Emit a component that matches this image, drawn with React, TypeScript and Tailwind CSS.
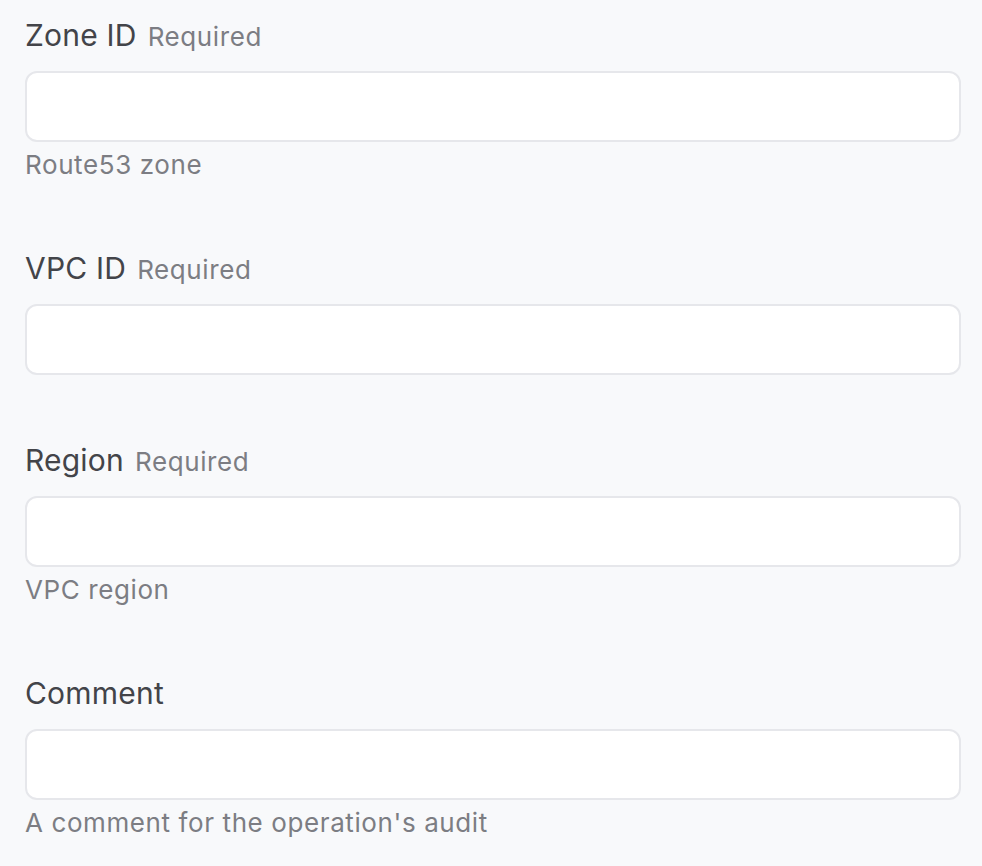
import React from 'react';

interface FieldProps {
  label: string;
  required?: boolean;
  help?: string;
}

const Field: React.FC<FieldProps> = ({ label, required, help }) => {
  return (
    <div className="mb-[67px]">
      <label className="flex items-baseline gap-[11px] h-[36px] leading-[36px]">
        <span className="text-[30px] tracking-[0.2px] text-[#434449]">{label}</span>
        {required && (
          <span className="text-[26px] tracking-[0.6px] text-[#7c7d83]">Required</span>
        )}
      </label>
      <input
        type="text"
        className="mt-[18px] block w-full h-[71px] rounded-[12px] border-2 border-[#e6e7eb] bg-white outline-none"
      />
      {help && (
        <p className="mt-[5px] mb-[3px] leading-[36px] text-[26px] tracking-[0.6px] text-[#7c7d83]">
          {help}
        </p>
      )}
    </div>
  );
};

export default function App() {
  return (
    <div
      className="min-h-[866px] bg-[#f8f9fb] pl-[25px] pr-[21px] pt-[17px]"
      style={{ fontFamily: 'Inter, "Noto Sans", sans-serif' }}
    >
      <Field label="Zone ID" required help="Route53 zone" />
      <Field label="VPC ID" required />
      <Field label="Region" required help="VPC region" />
      <Field label="Comment" help="A comment for the operation's audit" />
    </div>
  );
}
